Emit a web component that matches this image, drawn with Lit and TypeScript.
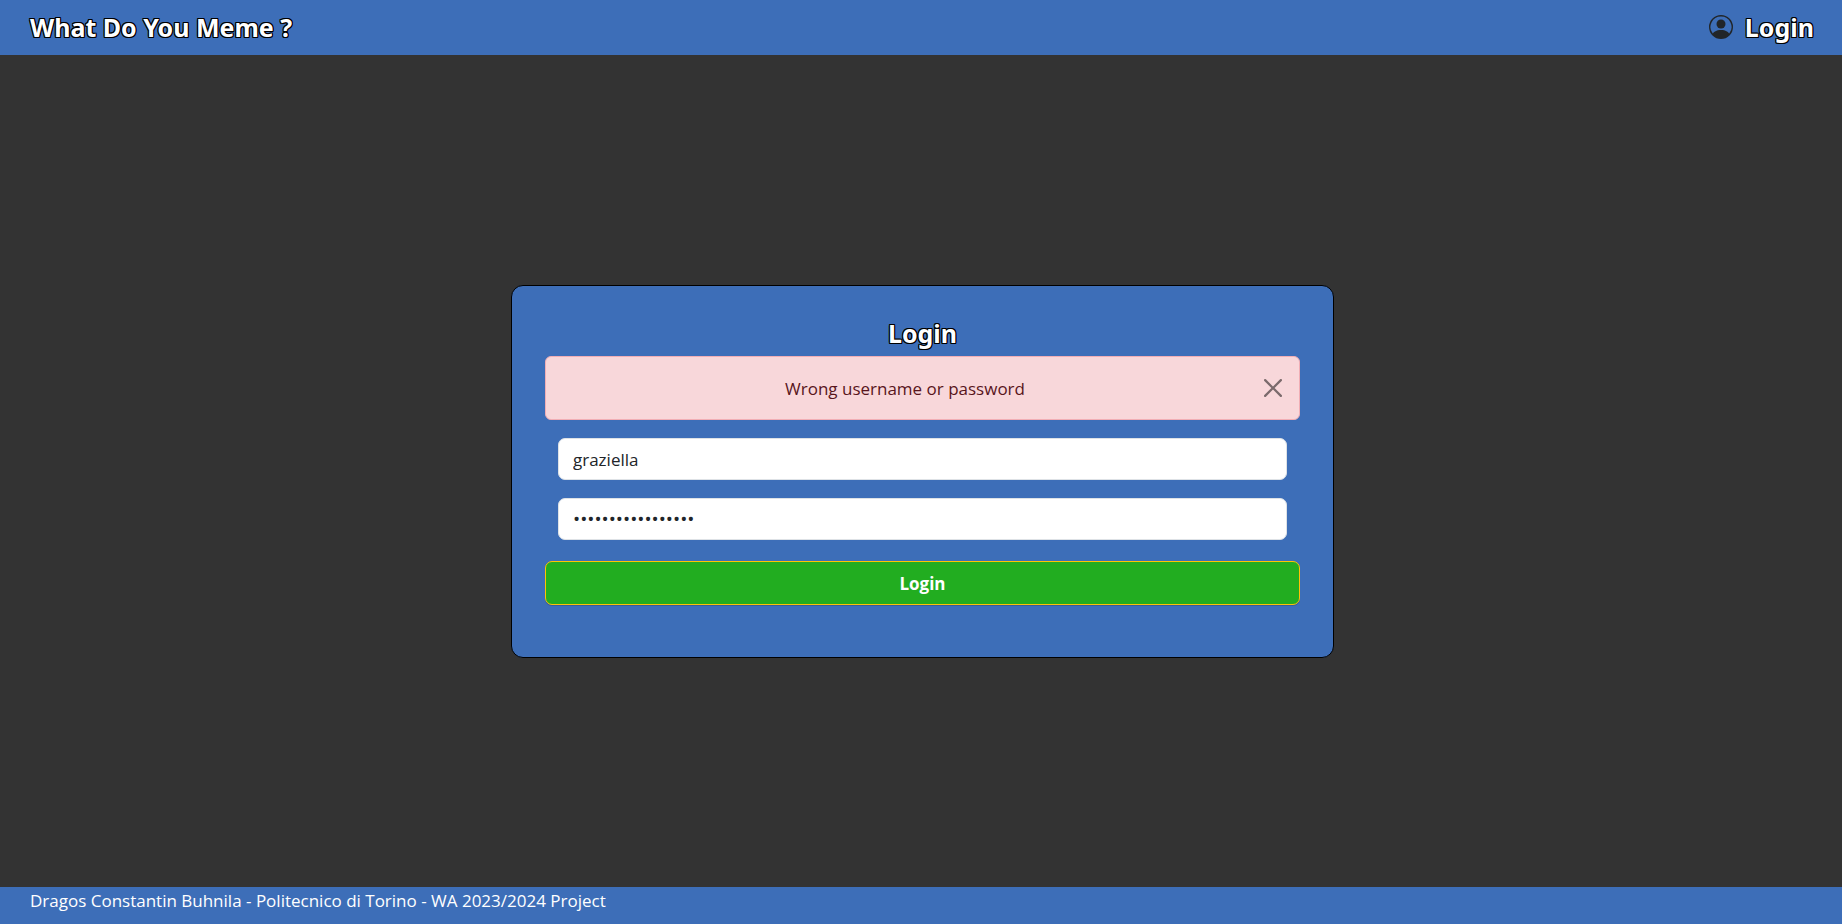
import { LitElement, html, css } from "lit";
import { customElement, state } from "lit/decorators.js";

@customElement("app-root")
export class AppRoot extends LitElement {
  @state() private showAlert = true;
  @state() private username = "graziella";
  @state() private password = "wrongpassword1234";

  static styles = css`
    :host {
      --blue: #3d6eb8;
      display: flex;
      flex-direction: column;
      min-height: 100vh;
      background: #333333;
      color: #212529;
      font-family: "Open Sans", "Noto Sans", sans-serif;
      font-size: 17px;
      line-height: 27px;
    }
    * { box-sizing: border-box; }
    .outlined {
      color: #fff;
      font-family: "Noto Sans", sans-serif;
      font-size: 25px;
      font-weight: 700;
      line-height: 32px;
      text-shadow: -1px -1px 0 #000, 1px -1px 0 #000, -1px 1px 0 #000,
        1px 1px 0 #000, 0 -1px 0 #000, 0 1px 0 #000, -1px 0 0 #000, 1px 0 0 #000;
    }
    header {
      display: flex;
      align-items: center;
      justify-content: space-between;
      height: 55px;
      padding: 0 28px 2px 30px;
      background: var(--blue);
    }
    a { text-decoration: none; }
    .account {
      display: flex;
      align-items: center;
      gap: 12px;
    }
    .account svg { display: block; color: #212529; }
    main {
      flex: 1;
      display: flex;
      align-items: center;
      justify-content: center;
      padding: 1px 0 0 3px;
    }
    .card {
      display: flex;
      flex-direction: column;
      width: 100%;
      max-width: 823px;
      padding: 31px 33px 52px;
      border: 1px solid #000;
      border-radius: 12px;
      background: var(--blue);
    }
    h1 { margin: 0 0 7px; text-align: center; }
    .alert {
      display: flex;
      align-items: center;
      gap: 18px;
      height: 64px;
      margin-bottom: 18px;
      padding: 0 17px 0 18px;
      border: 1px solid #f1aeb5;
      border-radius: 6px;
      background: #f8d7da;
      color: #58151c;
    }
    .alert span { flex: 1; text-align: center; }
    .close {
      display: flex;
      padding: 0;
      border: 0;
      background: none;
      color: #000;
      opacity: 0.5;
      cursor: pointer;
    }
    .fields {
      display: flex;
      flex-direction: column;
      gap: 18px;
      padding: 0 13px;
      margin-bottom: 21px;
    }
    input {
      display: block;
      width: 100%;
      height: 42px;
      padding: 0 14px;
      border: 1px solid #dee2e6;
      border-radius: 7px;
      background: #fff;
      color: #212529;
      font: inherit;
    }
    input[type="password"] { font-size: 19px; }
    .submit {
      height: 44px;
      padding: 0;
      border: 1px solid #ffc107;
      border-radius: 7px;
      background: #22ad20;
      box-shadow: 0 1px 0 rgba(0, 0, 0, 0.15);
      color: #fff;
      font: inherit;
      font-weight: 700;
      cursor: pointer;
    }
    footer {
      height: 37px;
      padding: 0 30px;
      background: var(--blue);
      color: #fff;
    }
  `;

  render() {
    return html`
      <header>
        <a class="outlined" href="#home">What Do You Meme ?</a>
        <a class="account outlined" href="#login">
          <svg width="24" height="24" viewBox="0 0 16 16" fill="currentColor" aria-hidden="true">
            <path d="M11 6a3 3 0 1 1-6 0 3 3 0 0 1 6 0" />
            <path fill-rule="evenodd" d="M0 8a8 8 0 1 1 16 0A8 8 0 0 1 0 8m8-7a7 7 0 0 0-5.468 11.37C3.242 11.226 4.805 10 8 10s4.757 1.225 5.468 2.37A7 7 0 0 0 8 1" />
          </svg>
          Login
        </a>
      </header>
      <main>
        <form class="card" @submit=${(e: Event) => e.preventDefault()}>
          <h1 class="outlined">Login</h1>
          ${this.showAlert
            ? html`<div class="alert" role="alert">
                <span>Wrong username or password</span>
                <button class="close" type="button" aria-label="Close" @click=${() => (this.showAlert = false)}>
                  <svg width="18" height="18" viewBox="0 0 16 16" fill="currentColor" aria-hidden="true">
                    <path d="M.293.293a1 1 0 0 1 1.414 0L8 6.586 14.293.293a1 1 0 1 1 1.414 1.414L9.414 8l6.293 6.293a1 1 0 0 1-1.414 1.414L8 9.414l-6.293 6.293a1 1 0 0 1-1.414-1.414L6.586 8 .293 1.707a1 1 0 0 1 0-1.414" />
                  </svg>
                </button>
              </div>`
            : null}
          <div class="fields">
            <input type="text" aria-label="Username" autocomplete="username" .value=${this.username}
              @input=${(e: Event) => (this.username = (e.target as HTMLInputElement).value)} />
            <input type="password" aria-label="Password" autocomplete="current-password" .value=${this.password}
              @input=${(e: Event) => (this.password = (e.target as HTMLInputElement).value)} />
          </div>
          <button class="submit" type="submit">Login</button>
        </form>
      </main>
      <footer>Dragos Constantin Buhnila - Politecnico di Torino - WA 2023/2024 Project</footer>
    `;
  }
}
